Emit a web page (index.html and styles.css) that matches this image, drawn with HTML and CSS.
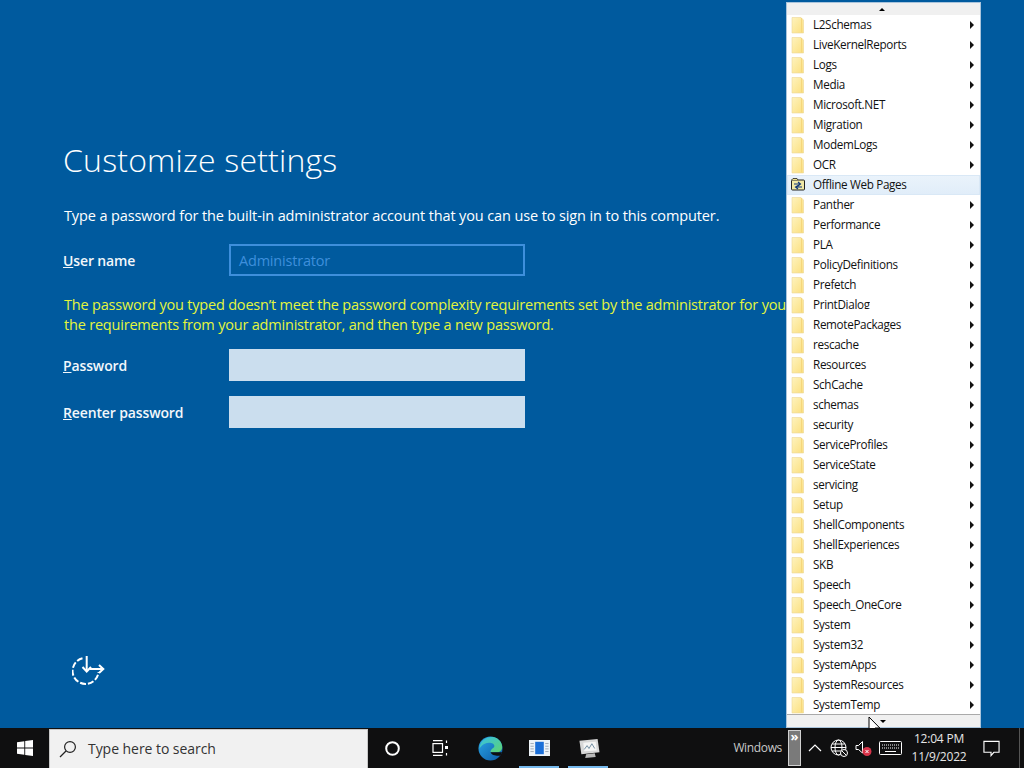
FILE: index.html
```html
<!DOCTYPE html>
<html lang="en">
<head>
<meta charset="utf-8">
<title>Customize settings</title>
<link rel="stylesheet" href="styles.css">
</head>
<body>
<svg class="defs" width="0" height="0" aria-hidden="true">
  <defs>
    <linearGradient id="fg" x1="0" y1="0" x2="1" y2="1">
      <stop offset="0" stop-color="#fef3bd"/>
      <stop offset="1" stop-color="#fbdf7e"/>
    </linearGradient>
    <symbol id="folder" viewBox="0 0 14 18">
      <path d="M1 1.500 H10 L12.500 4 V17 H1 Z" fill="url(#fg)" stroke="#ecd797" stroke-width=".6"/>
      <path d="M10.500 2 V16.500" stroke="#f5d67c" stroke-width="1"/>
    </symbol>
    <linearGradient id="eg1" x1="0" y1="0" x2="1" y2="1">
      <stop offset="0" stop-color="#2aa6e6"/>
      <stop offset="1" stop-color="#0c5aa8"/>
    </linearGradient>
    <linearGradient id="eg2" x1="0" y1="0" x2="1" y2="1">
      <stop offset="0" stop-color="#35bfe8"/>
      <stop offset="1" stop-color="#5fd46f"/>
    </linearGradient>
  </defs>
</svg>

<div class="desktop">
  <main class="oobe">
    <h1 class="title">Customize settings</h1>
    <p class="intro">Type a password for the built-in administrator account that you can use to sign in to this computer.</p>
    <div class="row first">
      <label class="label"><u>U</u>ser name</label>
      <div class="field disabled">Administrator</div>
    </div>
    <p class="warn">The password you typed doesn’t meet the password complexity requirements set by the administrator for you<br>the requirements from your administrator, and then type a new password.</p>
    <div class="row after-warn">
      <label class="label"><u>P</u>assword</label>
      <div class="field"></div>
    </div>
    <div class="row">
      <label class="label"><u>R</u>eenter password</label>
      <div class="field"></div>
    </div>
    <div class="spacer"></div>
    <svg class="access" width="33" height="29" viewBox="0 0 33 29" fill="none" stroke="#fff" stroke-width="2">
      <path d="M10.500 2.300 A13 13 0 1 0 26.500 16" stroke-dasharray="6 2"/>
      <path d="M14.700 0 V15"/>
      <path d="M10.500 11 L14.700 15.500 L19 11"/>
      <path d="M18 13 H31"/>
      <path d="M27 9 L31.300 13 L27 17"/>
    </svg>
  </main>

  <nav class="menu">
    <div class="scroll top"><span class="up"></span></div>
    <ul class="items">
      <li class="item"><svg class="ficon"><use href="#folder"/></svg><span class="name">L2Schemas</span><span class="more"></span></li>
      <li class="item"><svg class="ficon"><use href="#folder"/></svg><span class="name">LiveKernelReports</span><span class="more"></span></li>
      <li class="item"><svg class="ficon"><use href="#folder"/></svg><span class="name">Logs</span><span class="more"></span></li>
      <li class="item"><svg class="ficon"><use href="#folder"/></svg><span class="name">Media</span><span class="more"></span></li>
      <li class="item"><svg class="ficon"><use href="#folder"/></svg><span class="name">Microsoft.NET</span><span class="more"></span></li>
      <li class="item"><svg class="ficon"><use href="#folder"/></svg><span class="name">Migration</span><span class="more"></span></li>
      <li class="item"><svg class="ficon"><use href="#folder"/></svg><span class="name">ModemLogs</span><span class="more"></span></li>
      <li class="item"><svg class="ficon"><use href="#folder"/></svg><span class="name">OCR</span><span class="more"></span></li>
      <li class="item active">
        <svg class="ficon" viewBox="0 0 14 18"><rect x=".5" y="4" width="13" height="10" rx="1" fill="#f1e9a6" stroke="#222"/><path d="M.5 4 L2 2.500 H6 L7 4" fill="#e9dd8c" stroke="#222" stroke-width=".8"/><path d="M3 8 H9 M7 6 L9.500 8 L7 10 M11 11 H5 M7 9.500 L4.500 11 L7 13" stroke="#10357a" stroke-width="1.100" fill="none"/></svg>
        <span class="name">Offline Web Pages</span></li>
      <li class="item"><svg class="ficon"><use href="#folder"/></svg><span class="name">Panther</span><span class="more"></span></li>
      <li class="item"><svg class="ficon"><use href="#folder"/></svg><span class="name">Performance</span><span class="more"></span></li>
      <li class="item"><svg class="ficon"><use href="#folder"/></svg><span class="name">PLA</span><span class="more"></span></li>
      <li class="item"><svg class="ficon"><use href="#folder"/></svg><span class="name">PolicyDefinitions</span><span class="more"></span></li>
      <li class="item"><svg class="ficon"><use href="#folder"/></svg><span class="name">Prefetch</span><span class="more"></span></li>
      <li class="item"><svg class="ficon"><use href="#folder"/></svg><span class="name clipped">PrintDialog</span><span class="more"></span></li>
      <li class="item"><svg class="ficon"><use href="#folder"/></svg><span class="name">RemotePackages</span><span class="more"></span></li>
      <li class="item"><svg class="ficon"><use href="#folder"/></svg><span class="name">rescache</span><span class="more"></span></li>
      <li class="item"><svg class="ficon"><use href="#folder"/></svg><span class="name">Resources</span><span class="more"></span></li>
      <li class="item"><svg class="ficon"><use href="#folder"/></svg><span class="name">SchCache</span><span class="more"></span></li>
      <li class="item"><svg class="ficon"><use href="#folder"/></svg><span class="name">schemas</span><span class="more"></span></li>
      <li class="item"><svg class="ficon"><use href="#folder"/></svg><span class="name">security</span><span class="more"></span></li>
      <li class="item"><svg class="ficon"><use href="#folder"/></svg><span class="name">ServiceProfiles</span><span class="more"></span></li>
      <li class="item"><svg class="ficon"><use href="#folder"/></svg><span class="name">ServiceState</span><span class="more"></span></li>
      <li class="item"><svg class="ficon"><use href="#folder"/></svg><span class="name">servicing</span><span class="more"></span></li>
      <li class="item"><svg class="ficon"><use href="#folder"/></svg><span class="name">Setup</span><span class="more"></span></li>
      <li class="item"><svg class="ficon"><use href="#folder"/></svg><span class="name">ShellComponents</span><span class="more"></span></li>
      <li class="item"><svg class="ficon"><use href="#folder"/></svg><span class="name">ShellExperiences</span><span class="more"></span></li>
      <li class="item"><svg class="ficon"><use href="#folder"/></svg><span class="name">SKB</span><span class="more"></span></li>
      <li class="item"><svg class="ficon"><use href="#folder"/></svg><span class="name">Speech</span><span class="more"></span></li>
      <li class="item"><svg class="ficon"><use href="#folder"/></svg><span class="name">Speech_OneCore</span><span class="more"></span></li>
      <li class="item"><svg class="ficon"><use href="#folder"/></svg><span class="name">System</span><span class="more"></span></li>
      <li class="item"><svg class="ficon"><use href="#folder"/></svg><span class="name">System32</span><span class="more"></span></li>
      <li class="item"><svg class="ficon"><use href="#folder"/></svg><span class="name">SystemApps</span><span class="more"></span></li>
      <li class="item"><svg class="ficon"><use href="#folder"/></svg><span class="name">SystemResources</span><span class="more"></span></li>
      <li class="item"><svg class="ficon"><use href="#folder"/></svg><span class="name">SystemTemp</span><span class="more"></span></li>
    </ul>
    <div class="scroll bottom"><span class="down"></span></div>
  </nav>

  <svg class="cursor" width="13" height="20" viewBox="0 0 13 20"><path d="M1 1 V16 L4.500 12.700 L7 18.500 L9.500 17.400 L7 12 H11.800 Z" fill="#fff" stroke="#000" stroke-width="1"/></svg>
</div>

<footer class="taskbar">
  <div class="start">
    <svg width="16" height="16" viewBox="0 0 16 16" fill="#fff"><path d="M0 2.200 L7.300 1.200 V7.500 H0 Z M8.200 1.100 L16 0 V7.500 H8.200 Z M0 8.400 H7.300 V14.800 L0 13.800 Z M8.200 8.400 H16 V16 L8.200 14.900 Z"/></svg>
  </div>
  <div class="search">
    <svg width="18" height="18" viewBox="0 0 18 18" fill="none" stroke="#222" stroke-width="1.200"><circle cx="11" cy="7" r="5.400"/><path d="M7 11 L1 17"/></svg>
    <span class="search-text">Type here to search</span>
  </div>
  <div class="tbtn"><svg width="15" height="15" viewBox="0 0 15 15" fill="none" stroke="#fff" stroke-width="2"><circle cx="7.500" cy="7.500" r="6.300"/></svg></div>
  <div class="tbtn tview"><svg width="16" height="16" viewBox="0 0 16 16" fill="none" stroke="#fff" stroke-width="1.200"><path d="M1 .6 H10.500 M1 15.400 H10.500"/><rect x="1" y="3.600" width="9.500" height="8.800"/><path d="M14.500 .5 V3 M14.500 13 V15.500"/><rect x="13" y="6" width="3" height="3" fill="#fff" stroke="none"/></svg></div>
  <div class="tbtn">
    <svg width="25" height="25" viewBox="0 0 26 26">
      <circle cx="13" cy="13" r="12.500" fill="url(#eg1)"/>
      <path d="M6 4 C10 0 20 -1 24 7 C26.500 12 25 17 19 17 H13 C13 13 17 13 17 10.500 C17 7 11 6 7 8 C4 9.500 3 11 1.500 13 C2 9 3 6.500 6 4 Z" fill="url(#eg2)"/>
      <path d="M13 17 H25 C24.500 18.500 24 19.500 23 20.500 C19 21 14 20 13 17 Z" fill="#0f0f10"/>
    </svg>
  </div>
  <div class="tbtn running">
    <svg width="21" height="16" viewBox="0 0 22 18" preserveAspectRatio="none"><rect width="22" height="18" fill="#eef3f8"/><rect x="6.500" y="2" width="9" height="14" fill="#1b6fd8"/><path d="M1.500 4 H5 M1.500 7 H5 M1.500 10 H5 M1.500 13 H5 M17 4 H20.500 M17 7 H20.500 M17 10 H20.500 M17 13 H20.500" stroke="#9aa7b5"/></svg>
  </div>
  <div class="tbtn running">
    <svg width="24" height="21" viewBox="0 0 24 22"><path d="M2 3 L21 1 L23 15 L4 17 Z" fill="#d8d8d8"/><path d="M6 5 L19 4 L20 13 L7 14 Z" fill="#f5f5f5"/><path d="M7 12 L10 8 L12 11 L15 6 L18 11" stroke="#6d8aa0" fill="none"/><path d="M9 17 L18 16 L19 20 L8 21 Z" fill="#b9b9b9"/></svg>
  </div>
  <div class="grow"></div>
  <span class="winlabel">Windows</span>
  <div class="grip"><span>»</span></div>
  <div class="tray">
    <svg class="chev" width="14" height="8" viewBox="0 0 14 8" fill="none" stroke="#fff" stroke-width="1.200"><path d="M1 7 L7 1 L13 7"/></svg>
    <svg class="globe" width="18" height="18" viewBox="0 0 18 18" fill="none" stroke="#fff"><circle cx="8.500" cy="8.500" r="7.500"/><ellipse cx="8.500" cy="8.500" rx="3.500" ry="7.500"/><path d="M1 8.500 H16 M2 5 H15 M2 12 H15"/><circle cx="14" cy="14" r="3.500" fill="#101010"/><path d="M12 12 L16 16"/></svg>
    <svg class="speaker" width="17" height="18" viewBox="0 0 17 18"><path d="M1 6.500 H3.500 L7.500 2.500 V14 L3.500 10.500 H1 Z" fill="none" stroke="#fff"/><circle cx="12" cy="12.500" r="4.500" fill="#d8344a"/><path d="M10.500 11 L13.500 14 M13.500 11 L10.500 14" stroke="#fff"/></svg>
    <svg class="kbd" width="23" height="14" viewBox="0 0 23 14" fill="none" stroke="#fff"><rect x=".5" y=".5" width="22" height="13" rx="1"/><path d="M3 4 H20 M3 7 H20" stroke-dasharray="1 1"/><path d="M6 10.500 H17"/></svg>
  </div>
  <div class="clock"><span>12:04 PM</span><span>11/9/2022</span></div>
  <div class="notify">
    <svg width="17" height="17" viewBox="0 0 18 18" fill="none" stroke="#fff" stroke-width="1.200"><path d="M1 1.500 H17 V13 H11.500 L8.500 16.500 V13 H1 Z"/></svg>
  </div>
  <div class="peek"></div>
</footer>
</body>
</html>
```
FILE: styles.css
```css
* { box-sizing: border-box; }
html, body { margin: 0; padding: 0; }
body {
  width: 1024px;
  height: 768px;
  overflow: hidden;
  display: flex;
  flex-direction: column;
  font-family: "Open Sans", "Noto Sans", sans-serif;
  background: #005a9e;
}
.defs { position: absolute; }
.desktop {
  position: relative;
  flex: 1;
  min-height: 0;
  overflow: hidden;
}
.oobe {
  height: 100%;
  padding: 140px 0 43px 63px;
  display: flex;
  flex-direction: column;
  color: #fff;
}
.title {
  margin: 0;
  font-size: 32px;
  line-height: 40px;
  font-weight: 300;
  letter-spacing: 0.2px;
}
.intro {
  margin: 26px 0 0 1px;
  font-size: 14.5px;
  line-height: 20px;
  letter-spacing: -0.12px;
  white-space: nowrap;
}
.row {
  display: grid;
  grid-template-columns: 166px 296px;
  align-items: center;
  margin-top: 15px;
  height: 32px;
}
.row.first { margin-top: 18px; }
.row.after-warn { margin-top: 14px; }
.label {
  font-size: 14px;
  font-weight: 600;
  letter-spacing: -0.13px;
  color: #f2f7fb;
}
.field {
  height: 32px;
  background: #cbdeee;
}
.field.disabled {
  background: transparent;
  border: 2px solid #3e8fdc;
  color: #3e8fdc;
  font-size: 14.5px;
  line-height: 30px;
  padding-left: 8px;
  letter-spacing: -0.2px;
}
.warn {
  margin: 19px 0 0 1px;
  font-size: 14.5px;
  line-height: 20px;
  letter-spacing: -0.2px;
  color: #e4f53c;
  white-space: nowrap;
}
.spacer { flex: 1; }
.access { display: block; margin-left: 9px; }

.menu {
  position: absolute;
  left: 786px;
  top: 2px;
  width: 195px;
  height: 726px;
  background: #fff;
  border: 1px solid #a9c4dc;
  display: flex;
  flex-direction: column;
}
.scroll {
  height: 12px;
  background: #f0f0f0;
  display: flex;
  align-items: center;
  justify-content: center;
  flex: none;
}
.scroll.bottom { border-top: 1px solid #aaa; height: 13px; }
.up { border: 3px solid transparent; border-top: 0; border-bottom: 3px solid #000; margin-right: 3px; }
.down { border: 3px solid transparent; border-bottom: 0; border-top: 3px solid #000; margin-right: 1px; }
.items {
  list-style: none;
  margin: 0;
  padding: 0;
  flex: 1;
  min-height: 0;
}
.item {
  position: relative;
  height: 20px;
  display: flex;
  align-items: center;
  padding-left: 4px;
  font-size: 11.7px;
  letter-spacing: -0.33px;
  color: #111;
}
.item.active {
  background: linear-gradient(#eaf3fb, #e0edf9);
  box-shadow: inset 0 0 0 1px #d9e8f6;
}
.ficon { width: 14px; height: 18px; flex: none; }
.name {
  margin-left: 8px;
  margin-bottom: 2px;
  flex: 1;
  white-space: nowrap;
  line-height: 18px;
}
.name.clipped {
  flex: none;
  align-self: flex-start;
  height: 14px;
  margin-bottom: 0;
  margin-right: auto;
  overflow: hidden;
}
.more {
  flex: none;
  width: 0;
  height: 0;
  margin-right: 6px;
  border-top: 4px solid transparent;
  border-bottom: 4px solid transparent;
  border-left: 4px solid #111;
}
.cursor { position: absolute; left: 868px; top: 716px; }

.taskbar {
  height: 40px;
  flex: none;
  background: #0f0f10;
  display: flex;
  align-items: center;
  color: #fff;
  font-size: 12px;
}
.start {
  width: 49px;
  height: 100%;
  display: flex;
  align-items: center;
  justify-content: center;
}
.search {
  width: 319px;
  height: 39px;
  margin-top: 1px;
  background: #f1f1f1;
  border: 1px solid #c8c8c8;
  border-bottom: 0;
  display: flex;
  align-items: center;
  padding-left: 9px;
  gap: 11px;
  color: #333;
  font-size: 14px;
  letter-spacing: -0.05px;
}
.search-text { padding-bottom: 2px; }
.tbtn {
  position: relative;
  width: 49px;
  height: 100%;
  display: flex;
  align-items: center;
  justify-content: center;
}
.tview svg { margin-right: 4px; }
.tbtn.running::after {
  content: "";
  position: absolute;
  left: 4px;
  right: 5px;
  bottom: 0;
  height: 2px;
  background: #76b9ed;
}
.grow { flex: 1; }
.winlabel {
  color: #c9c9c9;
  font-size: 12px;
  letter-spacing: -0.35px;
  margin-right: 6px;
  padding-bottom: 2px;
}
.grip {
  width: 13px;
  height: 36px;
  background: #7a7a7a;
  border: 1px solid #d0d0d0;
  font-size: 13px;
  font-weight: 700;
  line-height: 10px;
  text-align: center;
  flex: none;
}
.tray {
  display: flex;
  align-items: center;
  margin-left: 7px;
}
.chev { margin-right: 8px; }
.globe { margin-right: 7px; }
.speaker { margin-right: 7px; }
.kbd { margin-right: 10px; }
.clock {
  display: flex;
  flex-direction: column;
  align-items: center;
  width: 54px;
  font-size: 12px;
  line-height: 18px;
  letter-spacing: -0.2px;
  color: #e6e6e6;
}
.notify {
  width: 53px;
  height: 100%;
  padding-right: 3px;
  display: flex;
  align-items: center;
  justify-content: center;
}
.peek {
  width: 5px;
  height: 100%;
  border-left: 1px solid #555;
}
```
